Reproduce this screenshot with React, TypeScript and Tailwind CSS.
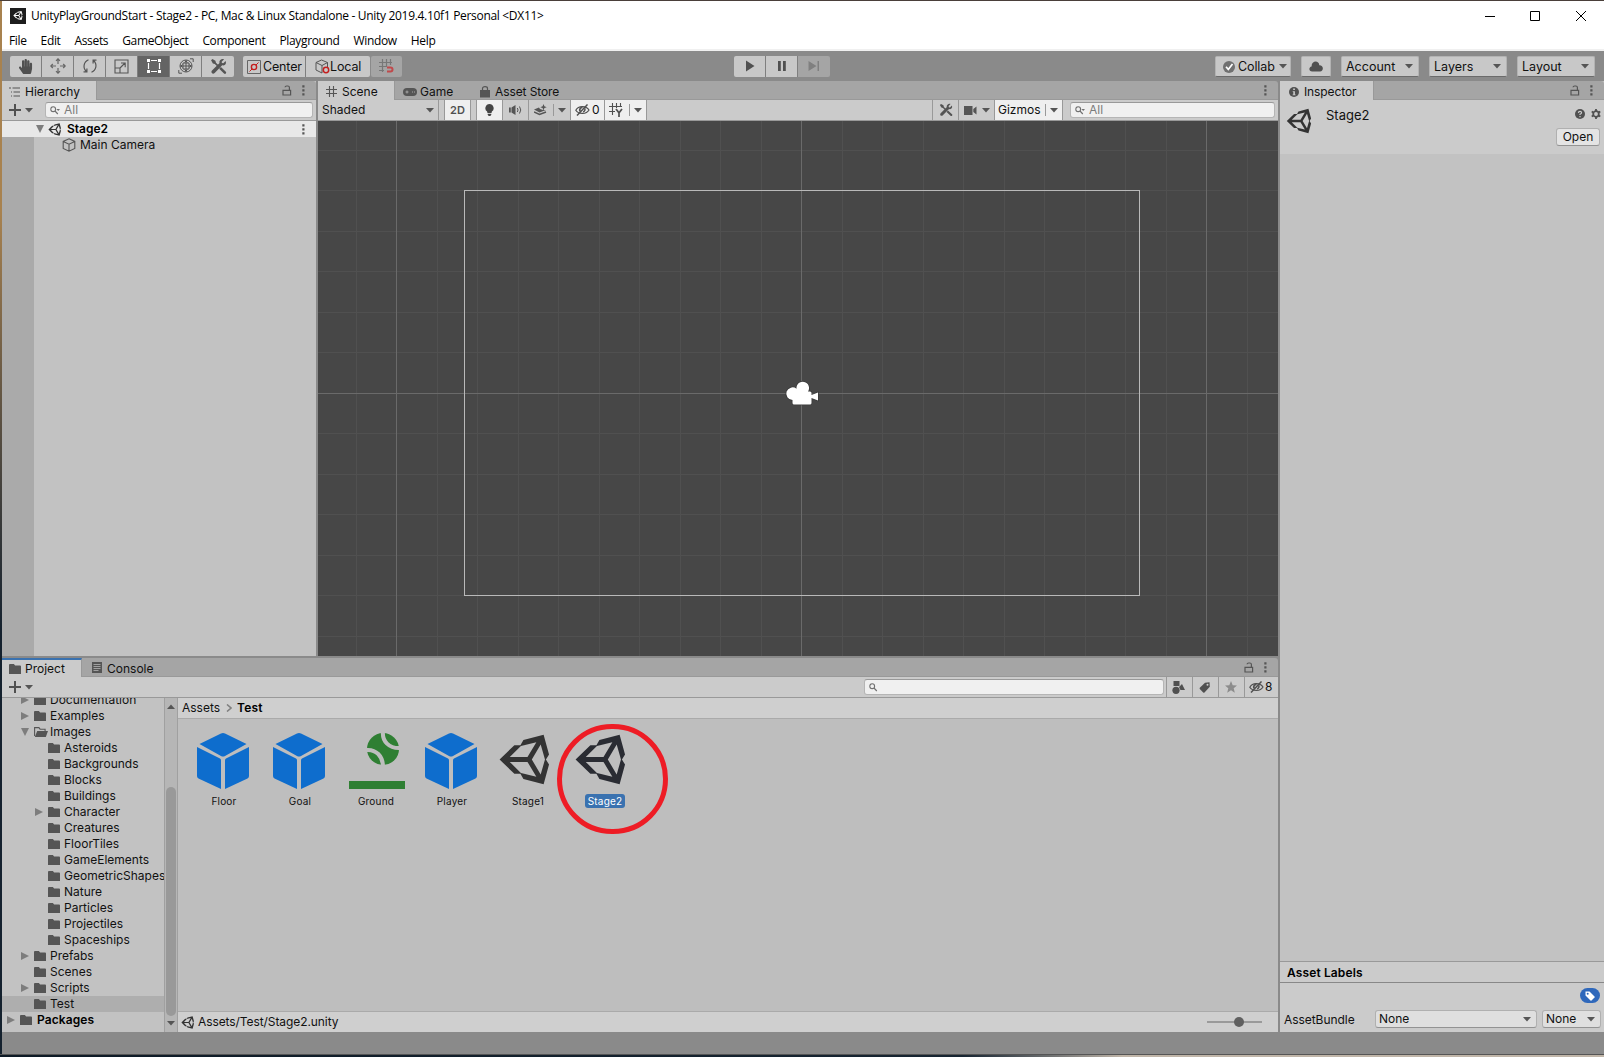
import React from "react";
import { FaHandPaper, FaUnity } from "react-icons/fa";

interface TreeItem {
  name: string;
  depth: number;
  arrow?: "right" | "down";
  selected?: boolean;
}

interface AssetItem {
  name: string;
  kind: "prefab" | "ground" | "scene";
  selected?: boolean;
}

const tree: TreeItem[] = [
  { name: "Documentation", depth: 1, arrow: "right" },
  { name: "Examples", depth: 1, arrow: "right" },
  { name: "Images", depth: 1, arrow: "down" },
  { name: "Asteroids", depth: 2 },
  { name: "Backgrounds", depth: 2 },
  { name: "Blocks", depth: 2 },
  { name: "Buildings", depth: 2 },
  { name: "Character", depth: 2, arrow: "right" },
  { name: "Creatures", depth: 2 },
  { name: "FloorTiles", depth: 2 },
  { name: "GameElements", depth: 2 },
  { name: "GeometricShapes", depth: 2 },
  { name: "Nature", depth: 2 },
  { name: "Particles", depth: 2 },
  { name: "Projectiles", depth: 2 },
  { name: "Spaceships", depth: 2 },
  { name: "Prefabs", depth: 1, arrow: "right" },
  { name: "Scenes", depth: 1 },
  { name: "Scripts", depth: 1, arrow: "right" },
  { name: "Test", depth: 1, selected: true },
  { name: "Packages", depth: 0, arrow: "right" },
];

const assets: AssetItem[] = [
  { name: "Floor", kind: "prefab" },
  { name: "Goal", kind: "prefab" },
  { name: "Ground", kind: "ground" },
  { name: "Player", kind: "prefab" },
  { name: "Stage1", kind: "scene" },
  { name: "Stage2", kind: "scene", selected: true },
];

const menus = ["File", "Edit", "Assets", "GameObject", "Component", "Playground", "Window", "Help"];

const indent: Record<number, string> = {
  0: "pl-[4px]",
  1: "pl-[18px]",
  2: "pl-[32px]",
};

/* ---------- Icons ---------- */

const Caret = ({ className = "" }: { className?: string }) => (
  <svg viewBox="0 0 8 5" className={`w-2 h-[5px] shrink-0 fill-[#555] ${className}`}>
    <path d="M0 0h8L4 4.6z" />
  </svg>
);

const Plus = () => (
  <svg viewBox="0 0 12 12" className="w-3 h-3 stroke-[#505050]" strokeWidth="2">
    <path d="M6 0v12M0 6h12" />
  </svg>
);

const Lock = () => (
  <svg viewBox="0 0 10 11" className="w-[10px] h-[11px] fill-none stroke-[#555]" strokeWidth="1.2">
    <path d="M1 5.4h7.6v4.6H1zM7.4 5.2V2.6C7.4 1.5 6.8 1 5.8 1H4.6c-1 0-1.5.4-1.6 1.3" />
  </svg>
);

const Dots = () => (
  <svg viewBox="0 0 3 11" className="w-[3px] h-[11px] fill-[#555]">
    <path d="M.3.3h2.2v2.2H.3zM.3 4.3h2.2v2.2H.3zM.3 8.3h2.2v2.2H.3z" />
  </svg>
);

const FolderIcon = () => (
  <svg viewBox="0 0 12 10" className="w-3 h-[10px] shrink-0 fill-[#555]">
    <path d="M0 .9Q0 0 .9 0h4l1.2 1.5h5Q12 1.5 12 2.4V10H0z" />
  </svg>
);

const FolderOpenIcon = () => (
  <svg viewBox="0 0 14 10" className="w-[14px] h-[10px] shrink-0">
    <path d="M.6 9V.6h4.3l1.2 1.6h5v2" className="fill-none stroke-[#555]" strokeWidth="1.1" />
    <path d="M3.2 4H14l-2.2 6H.8z" className="fill-[#555]" />
  </svg>
);

const Foldout = ({ dir }: { dir: "right" | "down" }) => (
  <svg viewBox="0 0 8 8" className="w-2 h-2 fill-[#7d7d7d]">
    {dir === "right" ? <path d="M0 0l8 4-8 4z" /> : <path d="M0 0h8L4 8z" />}
  </svg>
);

const SearchIcon = ({ caret }: { caret?: boolean }) => (
  <svg viewBox="0 0 10 9" className="w-[10px] h-[9px] shrink-0 fill-none stroke-[#707070]" strokeWidth="1.1">
    <circle cx="3.2" cy="3.2" r="2.4" />
    <path d="M5 5l2.8 3" />
    {caret && <path d="M6.4 3h3.6L8.2 5z" className="fill-[#707070] stroke-none" />}
  </svg>
);

const GridIcon = () => (
  <svg viewBox="0 0 11 11" className="w-[11px] h-[11px] stroke-[#555] fill-none" strokeWidth="1.1">
    <path d="M3.5 0v11M7.5 0v11M0 3.5h11M0 7.5h11" />
  </svg>
);

const CubeOutline = () => (
  <svg viewBox="0 0 14 14" className="w-[14px] h-[14px] shrink-0 fill-none stroke-[#555]" strokeWidth="1.1">
    <path d="M7 .8l5.8 2.6v7L7 13.2 1.2 10.4v-7zM1.2 3.4L7 6.200l5.800-2.800M7 6.200v7" />
  </svg>
);

const EyeOff = () => (
  <svg viewBox="0 0 15 12" className="w-[15px] h-3 shrink-0 fill-none stroke-[#505050]" strokeWidth="1.2">
    <path d="M.8 6.2C3.5 1.5 11 1.5 14 6 11.500 10.500 3.500 10.500.8 6.200z" />
    <path d="M7.5 3.4a2.600 2.600 0 0 0-2.400 3.900" strokeWidth="1.8" />
    <path d="M12.5.5L2 11.5" strokeWidth="1.5" />
    <path d="M9.8 4.3c.5 1.700-.2 3.100-1.600 3.700" strokeWidth="1.4" />
  </svg>
);

// Crossed wrench and screwdriver
const ToolsIcon = ({ className = "" }: { className?: string }) => (
  <svg viewBox="0 0 16 16" className={className}>
    <path
      d="M13.200 1.200l-2.200 2.300.2 1.300 1.300.2 2.200-2.200c.6 1.500.3 2.700-.5 3.500-.8.700-1.800.9-2.700.6L4.400 14.100c-.8.800-2 .8-2.600.1-.6-.6-.6-1.700.1-2.400L9 4.700c-.4-1-.1-2 .7-2.800.9-.8 2.200-1.200 3.500-.7z"
      className="fill-[#555]"
    />
    <path d="M1 2.200L2.300 1l2.800 1.700.5 1.800L8 6.900 6.900 8 4.500 5.600l-1.800-.5zM8.600 10.200l1.700-1.700 4.600 4.400c.5.500.4 1.200 0 1.700-.5.500-1.200.5-1.700 0z" className="fill-[#555]" />
  </svg>
);

const PrefabCube = () => (
  <svg viewBox="0 0 52 56" className="w-[52px] h-14 fill-[#0e6dcd]">
    <path d="M26 0q1 0 2 .5L49.5 11 28 23q-2 1-4 0L2.5 11 24 .5Q25 0 26 0z" />
    <path d="M0 14l23 11.500q1 .6 1 1.800V56L1.500 45.500Q0 44.700 0 43z" />
    <path d="M52 14L29 25.500q-1 .6-1 1.800V56l22.500-10.500q1.500-.8 1.500-2.500z" />
  </svg>
);

const GroundIcon = () => (
  <svg viewBox="0 0 56 56" className="w-14 h-14 ml-[4px]">
    <circle cx="34" cy="16" r="16" className="fill-[#2f7f33]" />
    <path d="M34-1C33 8 40 15.5 51 15M17 17c10-1 17 6 17 17" className="fill-none stroke-[#bebebe]" strokeWidth="4" />
    <path d="M0 48h56v8H0z" className="fill-[#2f7f33]" />
  </svg>
);

/* ---------- Small building blocks ---------- */

const Search = ({ text, caret, className }: { text?: string; caret?: boolean; className: string }) => (
  <div
    className={`flex items-center h-4 rounded-[3px] border border-[#b5b5b5] border-t-[#999] bg-[#f0f0f0] pl-1 gap-[4px] text-[#7b7b7b] ${className}`}
  >
    <SearchIcon caret={caret} />
    {text}
  </div>
);

const ToolButton = ({ children, active }: { children: React.ReactNode; active?: boolean }) => (
  <button
    className={`flex items-center justify-center w-8 h-full border-r border-[#7f7f7f] last:border-r-0 ${
      active ? "bg-[#646464]" : "bg-[#c8c8c8]"
    }`}
  >
    {children}
  </button>
);

const ToolbarDropdown = ({ label }: { label: string }) => (
  <button className="flex items-center justify-between w-[78px] h-[21px] pt-px pl-[4px] pr-[5px] rounded-[2px] bg-[#c8c8c8] border border-[#b3b3b3] border-b-[#6b6b6b]">
    {label}
    <Caret />
  </button>
);

const TabBar = ({ children }: { children: React.ReactNode }) => (
  <div className="flex h-[19px] shrink-0 bg-[#a5a5a5] pr-[11px] rounded-t-[3px] border-b border-[#999]">{children}</div>
);

const TabActions = () => (
  <div className="flex items-center gap-[10px] ml-auto">
    <Lock />
    <Dots />
  </div>
);

/* ---------- Top of the window ---------- */

const TitleBar = () => (
  <header className="h-[50px] bg-white border-b-2 border-[#f0f0f0] font-['Open_Sans','Noto_Sans',sans-serif] text-black">
    <div className="flex items-center h-[29px] pl-2">
      <div className="flex items-center justify-center w-4 h-4 bg-[#1d1d1d]">
        <FaUnity className="w-[11px] h-[11px] text-white" />
      </div>
      <span className="ml-[5px] text-[12px] tracking-[-0.31px] whitespace-nowrap">
        UnityPlayGroundStart - Stage2 - PC, Mac &amp; Linux Standalone - Unity 2019.4.10f1 Personal &lt;DX11&gt;
      </span>
      <svg viewBox="0 0 102 12" className="w-[102px] h-3 ml-auto mr-[17px] fill-none stroke-black" strokeWidth="1">
        <path d="M0 6.5h10M45.5 1.5h9v9h-9zM91 1l10 10M101 1L91 11" />
      </svg>
    </div>
    <nav className="flex items-center h-[21px] pl-[7px] gap-[14px] text-[12px] tracking-[-0.35px]">
      {menus.map((menu) => (
        <span key={menu}>{menu}</span>
      ))}
    </nav>
  </header>
);

const Toolbar = () => (
  <div className="flex items-center h-[30px] bg-[#8a8a8a] pl-2 pr-[9px] text-[12.5px]">
    <div className="flex h-[21px] rounded-[2px] overflow-hidden">
      <ToolButton>
        <FaHandPaper className="w-[15px] h-[15px] text-[#505050]" />
      </ToolButton>
      <ToolButton>
        <svg viewBox="0 0 16 16" className="w-4 h-4 fill-none stroke-[#666]" strokeWidth="1.2">
          <path d="M8 1v5M8 10v5M1 8h5M10 8h5M6 2.800L8 .8l2 2M6 13.200l2 2 2-2M2.800 6L.8 8l2 2M13.200 6l2 2-2 2" />
        </svg>
      </ToolButton>
      <ToolButton>
        <svg viewBox="0 0 16 16" className="w-4 h-4 fill-none stroke-[#555]" strokeWidth="1.2">
          <path d="M6.500 1.800C1.500 4 .5 10 4.500 13.500M1.500 13.800h3.400v-3.200M9.500 14.200C14.500 12 15.500 6 11.500 2.500M14.500 2.200h-3.400v3.200" />
        </svg>
      </ToolButton>
      <ToolButton>
        <svg viewBox="0 0 15 15" className="w-[15px] h-[15px] fill-none stroke-[#555]" strokeWidth="1.1">
          <path d="M1 1h13v13H1zM1 9h5v5M6 9l5-5M7 4h4.200v4.200" />
        </svg>
      </ToolButton>
      <ToolButton active>
        <svg viewBox="0 0 16 16" className="w-4 h-4 fill-none stroke-white" strokeWidth="1.2">
          <path d="M5 2.500h6M5 13.500h6M2.500 5v6M13.500 5v6" />
          <path d="M1 1h3v3H1zM12 1h3v3h-3zM1 12h3v3H1zM12 12h3v3h-3z" className="fill-white stroke-none" />
        </svg>
      </ToolButton>
      <ToolButton>
        <svg viewBox="0 0 16 16" className="w-4 h-4 fill-none stroke-[#555]" strokeWidth="1">
          <circle cx="8" cy="8" r="6" />
          <path d="M8 2v12M2 8h12M6.500 4.500L8 3l1.500 1.500M6.500 11.500L8 13l1.500-1.500M4.500 6.500L3 8l1.500 1.500M11.500 6.500L13 8l-1.500 1.500M5 5h6v6H5zM12 .8h3.200V4M.8 12v3.200H4" />
        </svg>
      </ToolButton>
      <ToolButton>
        <ToolsIcon className="w-[17px] h-[17px]" />
      </ToolButton>
    </div>

    <div className="flex h-[21px] ml-[9px] rounded-[2px] overflow-hidden">
      <button className="flex items-center w-[63px] pt-px pl-[4px] gap-[2px] bg-[#c8c8c8] border-r border-[#7f7f7f]">
        <svg viewBox="0 0 14 14" className="w-[14px] h-[14px] shrink-0 fill-none stroke-[#666]" strokeWidth="1">
          <path d="M.5.5h13v13H.5z" />
          <circle cx="7" cy="7" r="2.6" className="stroke-[#c41f1f]" strokeWidth="1.4" />
          <path d="M9 5l2.500-2.500M5 9l-2.500 2.500" className="stroke-[#c41f1f]" />
        </svg>
        <span className="tracking-[-0.15px]">Center</span>
      </button>
      <button className="flex items-center w-[64px] pt-px pl-[9px] bg-[#c8c8c8]">
        <svg viewBox="0 0 15 15" className="w-[15px] h-[15px] shrink-0 fill-none stroke-[#555]" strokeWidth="1">
          <path d="M7 14L1 11V3.500L6.500 1 12.500 3.500V8M1 3.500l6 3 5.500-3M7 6.500V14" />
          <circle cx="11" cy="11" r="2.7" className="fill-[#c8c8c8] stroke-[#c41f1f]" strokeWidth="1.5" />
        </svg>
        <span className="tracking-[-0.15px]">Local</span>
      </button>
    </div>
    <button className="flex items-center justify-center w-[31px] h-[21px] ml-[1px] rounded-[2px] bg-[#a5a5a5]">
      <svg viewBox="0 0 15 15" className="w-[15px] h-[15px] fill-none stroke-[#777]" strokeWidth="1.2">
        <path d="M3.500 0v13M7.500 0v7M11.500 0v6M0 3.500h13M0 7.500h8M0 11.500h5" />
        <path d="M8 8.500h3.500a2 2 0 0 1 0 4H8" className="stroke-[#c0494b]" strokeWidth="2" />
      </svg>
    </button>

    <div className="flex h-[21px] ml-[332px] rounded-[2px] overflow-hidden">
      <ToolButton>
        <svg viewBox="0 0 10 12" className="w-[10px] h-3 fill-[#505050]">
          <path d="M1 .5l8.500 5.500L1 11.500z" />
        </svg>
      </ToolButton>
      <ToolButton>
        <svg viewBox="0 0 10 12" className="w-[10px] h-3 fill-[#505050]">
          <path d="M1 1h2.800v10H1zM6 1h2.800v10H6z" />
        </svg>
      </ToolButton>
      <button className="flex items-center justify-center w-8 bg-[#a5a5a5]">
        <svg viewBox="0 0 12 12" className="w-3 h-3 fill-[#808080]">
          <path d="M.5 1l8 5-8 5zM9.500 1H11v10H9.500z" />
        </svg>
      </button>
    </div>

    <div className="flex items-center gap-[10px] ml-auto">
      <button className="flex items-center w-[76px] h-[21px] pt-px pl-[7px] gap-[3px] rounded-[2px] bg-[#c8c8c8] border border-[#b3b3b3] border-b-[#6b6b6b]">
        <svg viewBox="0 0 12 12" className="w-3 h-3 shrink-0">
          <circle cx="6" cy="6" r="6" className="fill-[#707070]" />
          <path d="M3 5.800l2.300 2.600L9.500 3" className="fill-none stroke-white" strokeWidth="1.7" />
        </svg>
        <span className="tracking-[-0.1px]">Collab</span>
        <Caret className="ml-[1px]" />
      </button>
      <button className="flex items-center justify-center w-[30px] h-[21px] rounded-[2px] bg-[#c8c8c8] border border-[#b3b3b3] border-b-[#6b6b6b]">
        <svg viewBox="0 0 14 11" className="w-[14px] h-[11px] fill-[#505050]">
          <path d="M3.200 10.500C-.3 10.500-.6 6 2.600 5.500 2.300-.5 10-1 10.300 4.200c4.500-.2 4.700 6.300.7 6.300z" />
        </svg>
      </button>
      <ToolbarDropdown label="Account" />
      <ToolbarDropdown label="Layers" />
      <ToolbarDropdown label="Layout" />
    </div>
  </div>
);

/* ---------- Hierarchy ---------- */

const Hierarchy = () => (
  <section className="flex flex-col w-[314px] bg-[#c2c2c2]">
    <TabBar>
      <div className="flex items-center w-[95px] h-[19px] pt-[2px] pl-[7px] gap-[5px] bg-[#cbcbcb] border-r border-[#999]">
        <svg viewBox="0 0 11 10" className="w-[11px] h-[10px] fill-none stroke-[#555]" strokeWidth="1.1">
          <path d="M0 1h2M3.500 1H11M2 5h1M4.500 5H11M2 9h1M4.500 9H11" />
        </svg>
        Hierarchy
      </div>
      <TabActions />
    </TabBar>
    <div className="flex items-center h-[21px] bg-[#cbcbcb] border-b border-[#999] pl-[7px] pr-[3px]">
      <Plus />
      <Caret className="ml-[4px]" />
      <Search text="All" caret className="ml-3 flex-1" />
    </div>
    <div className="flex items-center h-4 bg-[#e8e8e8] pl-[34px] pr-[11px] font-semibold text-black">
      <Foldout dir="down" />
      <FaUnity className="w-[15px] h-[15px] ml-[4px] mr-[4px] text-[#333]" />
      Stage2
      <span className="ml-auto">
        <Dots />
      </span>
    </div>
    <div className="flex flex-1">
      <div className="w-8 bg-[#aaaaaa]" />
      <div className="flex items-center h-4 pl-[28px] gap-[4px]">
        <CubeOutline />
        Main Camera
      </div>
    </div>
  </section>
);

/* ---------- Scene view ---------- */

const minorX = Array.from({ length: 24 }, (_, i) => Math.floor(38.2 + i * 40.5)).filter((x) => x < 960);
const minorY = Array.from({ length: 13 }, (_, i) => Math.floor(29.3 + i * 40.5));

const SceneView = () => (
  <div className="flex-1 bg-[#474747]">
    <svg viewBox="0 0 960 535" className="w-[960px] h-[535px]" shapeRendering="crispEdges">
      <g className="fill-[#505050]">
        {minorX.map((x) => (
          <rect key={x} x={x} y="0" width="1" height="535" />
        ))}
        {minorY.map((y) => (
          <rect key={y} x="0" y={y} width="960" height="1" />
        ))}
      </g>
      <g className="fill-[#6a6a6a]">
        <rect x="78" y="0" width="1" height="535" />
        <rect x="483" y="0" width="1" height="535" />
        <rect x="888" y="0" width="1" height="535" />
        <rect x="0" y="272" width="960" height="1" />
      </g>
      <rect x="146.5" y="69.5" width="675" height="405" className="fill-none stroke-[#b9b9b9]" />
      <g className="fill-white stroke-[#3a3a3a]" strokeWidth="1.5" paintOrder="stroke" shapeRendering="geometricPrecision">
        <path d="M474.500 279a6.300 6.300 0 1 1 4-11.200 6.300 6.300 0 1 1 11.500 2.700h2q1.500 0 1.500 1.500v2l6.500-2.500v8L493.500 277v5q0 1.500-1.500 1.500h-16q-1.500 0-1.500-1.500z" />
      </g>
    </svg>
  </div>
);

const Scene = () => (
  <section className="flex flex-col w-[960px]">
    <TabBar>
      <div className="flex items-center w-[77px] h-[19px] pt-[2px] pl-2 gap-[5px] bg-[#cbcbcb] border-r border-[#999]">
        <GridIcon />
        Scene
      </div>
      <div className="flex items-center w-[77px] pt-[3px] pl-2 gap-[3px]">
        <svg viewBox="0 0 14 8" className="w-[14px] h-2">
          <rect width="14" height="8" rx="4" className="fill-[#555]" />
          <path d="M2.500 4h3M4 2.500v3M9 4h1M11 4h1" className="stroke-[#a5a5a5]" strokeWidth="1" />
        </svg>
        Game
      </div>
      <div className="flex items-center pt-[3px] pl-2 gap-[5px]">
        <svg viewBox="0 0 10 12" className="w-[10px] h-3">
          <path d="M0 4h10v7.500H0z" className="fill-[#555]" />
          <path d="M2.500 5V2.500Q2.500.7 5 .7t2.500 1.800V5" className="fill-none stroke-[#555]" strokeWidth="1.2" />
        </svg>
        <span className="tracking-[-0.1px]">Asset Store</span>
      </div>
      <div className="flex items-center ml-auto">
        <Dots />
      </div>
    </TabBar>
    <div className="flex h-[21px] bg-[#cbcbcb] border-b border-[#999]">
      <div className="flex items-center justify-between w-[121px] pl-1 pr-1 border-r border-[#999]">
        Shaded
        <Caret />
      </div>
      <div className="flex items-center justify-center w-[27px] ml-[5px] border-x border-[#999] bg-[#efefef] text-[11px] font-semibold text-[#505050]">
        2D
      </div>
      <div className="flex items-center justify-center w-[27px] ml-[5px] border-x border-[#999] bg-[#efefef]">
        <svg viewBox="0 0 9 12" className="w-[9px] h-3 fill-[#444]">
          <path d="M4.500 0a4.200 4.200 0 0 1 2.400 7.600L6.500 9h-4l-.4-1.400A4.200 4.200 0 0 1 4.500 0zM2.700 9.800h3.600v1L5.300 12H3.700l-1-1.200z" />
        </svg>
      </div>
      <div className="flex items-center justify-center w-[26px] border-r border-[#999]">
        <svg viewBox="0 0 13 10" className="w-[13px] h-[10px]">
          <path d="M0 2.500h1.800v5H0zM2.500 2.500L6.500 0v10l-4-2.500z" className="fill-[#555]" />
          <path d="M8.300 3q1.500 2 0 4M10.500 1.500q2.500 3.500 0 7" className="fill-none stroke-[#555]" strokeWidth="1" />
        </svg>
      </div>
      <div className="flex items-center w-[42px] pl-[5px] border-r border-[#999]">
        <svg viewBox="0 0 14 12" className="w-[14px] h-3">
          <path d="M0 5.500l5-2 1 1.500 3 1 3 0L5.500 8.500z" className="fill-[#555]" />
          <path d="M0 8L5.500 10.500 12 8" className="fill-none stroke-[#555]" strokeWidth="1.4" />
          <path d="M9.500 0l.9 2.300 2.300.9-2.300.9-.9 2.300-.9-2.300L6.300 3.200l2.300-.9z" className="fill-[#555]" />
        </svg>
        <div className="w-px h-3 ml-[5px] mr-[4px] bg-[#999]" />
        <Caret />
      </div>
      <div className="flex items-center w-[34px] pl-1 gap-[2px] border-r border-[#999] bg-[#efefef]">
        <EyeOff />0
      </div>
      <div className="flex items-center w-[42px] pl-1 border-r border-[#999] bg-[#efefef]">
        <svg viewBox="0 0 15 14" className="w-[15px] h-[14px] fill-none stroke-[#505050]" strokeWidth="1.1">
          <path d="M3.500 0v12M7.500 0v5M11.500 0v4M0 3.500h13M0 8.500h6" />
          <path d="M7 6l3 3.800L13 6M10 9.500V14" strokeWidth="1.7" />
        </svg>
        <div className="w-px h-3 ml-[5px] mr-[4px] bg-[#999]" />
        <Caret />
      </div>

      <div className="flex items-center justify-center w-[27px] ml-auto border-x border-[#999]">
        <ToolsIcon className="w-[14px] h-[14px]" />
      </div>
      <div className="flex items-center w-9 pl-[5px] gap-[5px] border-r border-[#999]">
        <svg viewBox="0 0 13 9" className="w-[13px] h-[9px] fill-[#555]">
          <path d="M0 0h8.500v9H0zM9.300 3L12.500.5v8L9.300 6z" />
        </svg>
        <Caret />
      </div>
      <div className="flex items-center w-[68px] pl-[3px] border-r border-[#999] bg-[#efefef]">
        Gizmos
        <div className="w-px h-3 ml-auto mr-1 bg-[#999]" />
        <Caret className="mr-[4px]" />
      </div>
      <div className="flex items-center pl-[7px] pr-[3px]">
        <Search text="All" caret className="w-[205px]" />
      </div>
    </div>
    <SceneView />
  </section>
);

/* ---------- Project ---------- */

const TreeRow = ({ item }: { item: TreeItem }) => (
  <div className={`flex items-center h-4 shrink-0 whitespace-nowrap ${indent[item.depth]} ${item.selected ? "bg-[#aeaeae]" : ""}`}>
    <div className="w-[14px] shrink-0 pl-[1px]">{item.arrow && <Foldout dir={item.arrow} />}</div>
    {item.arrow === "down" ? <FolderOpenIcon /> : <FolderIcon />}
    <span
      className={
        item.depth === 0 ? "ml-[5px] font-semibold tracking-[0.1px] text-black" : item.arrow === "down" ? "ml-[2px]" : "ml-1"
      }
    >
      {item.name}
    </span>
  </div>
);

const AssetTile = ({ item }: { item: AssetItem }) => (
  <div className="flex flex-col items-center w-[76px]">
    <div className="flex items-center justify-center h-14">
      {item.kind === "prefab" && <PrefabCube />}
      {item.kind === "ground" && <GroundIcon />}
      {item.kind === "scene" && (
        <FaUnity className={`w-[59px] h-[61px] shrink-0 mb-1 ${item.selected ? "text-[#2a2c33]" : "text-[#333]"}`} />
      )}
    </div>
    <span
      className={`mt-[5px] h-[14px] leading-[14px] rounded-[3px] text-[10px] tracking-[0.2px] ${
        item.selected ? "ml-[4px] px-[3px] bg-[#3a72b0] text-white" : "ml-[2px]"
      }`}
    >
      {item.name}
    </span>
  </div>
);

const FilterButton = ({ children }: { children: React.ReactNode }) => (
  <div className="flex items-center justify-center w-[26px] h-full pr-[2px] border-l border-[#999]">{children}</div>
);

const Project = () => (
  <section className="flex flex-col h-[374px]">
    <TabBar>
      <div className="flex items-center w-20 h-[19px] pl-[7px] gap-[4px] bg-[#cbcbcb] border-t-2 border-t-[#3a72b0] border-r border-r-[#999]">
        <FolderIcon />
        Project
      </div>
      <div className="flex items-center pt-[3px] pl-[10px] gap-[5px]">
        <svg viewBox="0 0 10 11" className="w-[10px] h-[11px] mb-[2px]">
          <path d="M0 0h10v11H0z" className="fill-[#555]" />
          <path d="M1.500 2.500h7M1.500 4.500h7M1.500 6.500h7M1.500 8.500h5" className="stroke-[#b5b5b5]" strokeWidth=".8" />
        </svg>
        Console
      </div>
      <TabActions />
    </TabBar>
    <div className="flex items-center h-[21px] bg-[#cbcbcb] border-b border-[#999] pl-[7px]">
      <Plus />
      <Caret className="ml-[4px]" />
      <Search className="w-[300px] ml-auto mr-[2px]" />
      <FilterButton>
        <svg viewBox="0 0 13 13" className="w-[13px] h-[13px] fill-[#505050]">
          <path d="M1.500 0h6v5h-6zM10 3l3 6H8.500L7 6z" />
          <circle cx="4" cy="9.3" r="3.6" />
        </svg>
      </FilterButton>
      <FilterButton>
        <svg viewBox="0 0 11 11" className="w-[11px] h-[11px]">
          <path d="M6 .8L10.500.3 10.800 4.800 5.500 10.500Q4.800 11 4.200 10.500L.8 7Q.3 6.300.8 5.700z" className="fill-[#505050]" />
          <circle cx="8.5" cy="2.7" r="1" className="fill-[#cbcbcb]" />
        </svg>
      </FilterButton>
      <FilterButton>
        <svg viewBox="0 0 12 12" className="w-3 h-3 fill-[#8c8c8c]">
          <path d="M6 0l1.700 4.200 4.300.3-3.300 2.800 1.100 4.400L6 9.300l-3.800 2.400 1.100-4.400L0 4.500l4.300-.3z" />
        </svg>
      </FilterButton>
      <div className="flex items-center w-[34px] h-full pl-[4px] gap-[1px] border-l border-[#999]">
        <EyeOff />8
      </div>
    </div>
    <div className="flex h-[334px]">
      <div className="flex flex-col justify-end w-[162px] pb-1 overflow-hidden bg-[#c2c2c2]">
        {tree.map((item) => (
          <TreeRow key={item.name} item={item} />
        ))}
      </div>
      <div className="flex flex-col items-center w-[14px] py-[6px] bg-[#b6b6b6] border-x border-[#a0a0a0]">
        <Caret className="rotate-180" />
        <div className="w-[10px] h-[229px] mt-auto rounded-full bg-[#999]" />
        <Caret className="mt-[5px]" />
      </div>
      <div className="flex flex-col flex-1 bg-[#bebebe]">
        <div className="flex items-center h-[21px] pl-1 bg-[#cfcfcf] border-b border-[#aaa]">
          Assets
          <svg viewBox="0 0 6 8" className="w-[6px] h-2 ml-[6px] mr-[5px] fill-none stroke-[#808080]" strokeWidth="1.6">
            <path d="M1 .5L5 4 1 7.500" />
          </svg>
          <span className="font-semibold tracking-[0.2px] text-black">Test</span>
        </div>
        <div className="relative flex flex-1 pl-[7px] pt-[14px]">
          {assets.map((item) => (
            <AssetTile key={item.name} item={item} />
          ))}
          {/* Highlight ring around the new scene */}
          <div className="absolute left-[379px] top-[5px] w-[111px] h-[110px] rounded-full border-[5px] border-[#ee1c25]" />
        </div>
        <div className="flex items-center h-[21px] pl-[3px] pr-4 bg-[#cfcfcf] border-t border-[#aaa]">
          <FaUnity className="w-[15px] h-[15px] mr-[2px] text-[#333]" />
          <span className="tracking-[-0.08px]">Assets/Test/Stage2.unity</span>
          <svg viewBox="0 0 55 10" className="w-[55px] h-[10px] ml-auto">
            <path d="M0 5h55" className="stroke-[#888]" strokeWidth="1.5" />
            <circle cx="32" cy="5" r="5" className="fill-[#606060]" />
          </svg>
        </div>
      </div>
    </div>
  </section>
);

/* ---------- Inspector ---------- */

const Inspector = () => (
  <section className="flex flex-col flex-1 bg-[#c2c2c2]">
    <TabBar>
      <div className="flex items-center w-[94px] h-[19px] pt-[2px] pl-[9px] gap-[5px] bg-[#cbcbcb] border-r border-[#999]">
        <svg viewBox="0 0 10 10" className="w-[10px] h-[10px]">
          <circle cx="5" cy="5" r="5" className="fill-[#505050]" />
          <path d="M4.200 1.600h1.700v1.500H4.200zM3.700 4.200h2.200v3.200h.7v.9H3.600v-.9h.7V5h-.6z" className="fill-[#cbcbcb]" />
        </svg>
        <span className="tracking-[-0.1px]">Inspector</span>
      </div>
      <TabActions />
    </TabBar>
    <div className="flex h-[54px] pt-[8px] pl-[6px] pr-[4px] bg-[#cbcbcb]">
      <FaUnity className="w-[29px] h-[30px] -mt-[2px] text-[#333]" />
      <div className="flex flex-col flex-1 pl-[11px]">
        <div className="flex items-center justify-between h-[13px] -mr-[1px]">
          <span className="text-[13px]">Stage2</span>
          <div className="flex items-center gap-[6px] -mt-[2px]">
            <svg viewBox="0 0 10 10" className="w-[10px] h-[10px]">
              <circle cx="5" cy="5" r="5" className="fill-[#505050]" />
              <path d="M3.400 3.900Q3.500 2.400 5 2.400T6.600 3.700Q6.600 4.400 5 5.200V6M5 7v1.200" className="fill-none stroke-[#cbcbcb]" strokeWidth="1.2" />
            </svg>
            <svg viewBox="0 0 10 10" className="w-[10px] h-[10px] fill-none stroke-[#505050]">
              <circle cx="5" cy="5" r="2.8" strokeWidth="1.8" />
              <path d="M5 0v2M5 8v2M.7 2.500l1.700 1M7.600 6.500l1.700 1M.7 7.500l1.700-1M7.600 3.500l1.700-1" strokeWidth="1.8" />
            </svg>
          </div>
        </div>
        <button className="self-end w-[44px] h-[18px] mt-[7px] rounded-[3px] bg-[#e4e4e4] border border-[#b0b0b0] border-b-[#939393] leading-[16px]">
          Open
        </button>
      </div>
    </div>
    <div className="mt-auto bg-[#cbcbcb] border-t border-[#999]">
      <div className="flex items-center h-[21px] pt-[2px] pl-[7px] border-b border-[#888] font-semibold tracking-[0.12px] text-black">
        Asset Labels
      </div>
      <div className="flex justify-end pt-[5px] pr-1">
        <div className="flex items-center justify-center w-5 h-[15px] rounded-full bg-[#2f68bb]">
          <svg viewBox="0 0 10 10" className="w-[10px] h-[10px]">
            <path d="M.5.5h4l5 5q.5.500 0 1L6.500 9.500q-.5.500-1 0l-5-5z" className="fill-white" />
            <circle cx="2.7" cy="2.7" r="1" className="fill-[#2f68bb]" />
          </svg>
        </div>
      </div>
      <div className="flex items-center h-[29px] pl-1 pt-[3px] pr-[3px]">
        <span className="w-[91px] pt-[2px] tracking-[-0.05px]">AssetBundle</span>
        <div className="flex items-center justify-between w-[162px] h-[18px] pl-[3px] pr-[5px] rounded-[3px] bg-[#dfdfdf] border border-[#b0b0b0] border-b-[#939393]">
          None
          <Caret />
        </div>
        <div className="flex items-center justify-between w-[59px] h-[18px] ml-auto pl-[3px] pr-[5px] rounded-[3px] bg-[#dfdfdf] border border-[#b0b0b0] border-b-[#939393]">
          None
          <Caret />
        </div>
      </div>
    </div>
  </section>
);

const App: React.FC = () => {
  return (
    <div className="flex flex-col w-[1604px] h-[1057px] overflow-hidden bg-[#101c28] font-['Inter',sans-serif] text-[12px] leading-4 text-[#111]">
      <div className="h-px shrink-0 bg-[#4a3f3a]" />
      <div className="flex shrink-0 h-[1053px]">
        <div className="w-[2px] bg-linear-to-b from-[#a8824f] from-20% to-[#14212e] to-60%" />
        <div className="flex flex-col flex-1 bg-[#8a8a8a]">
          <TitleBar />
          <Toolbar />
          <div className="flex h-[951px] gap-[2px]">
            <div className="flex flex-col w-[1276px] gap-[2px]">
              <div className="flex h-[575px] gap-[2px]">
                <Hierarchy />
                <Scene />
              </div>
              <Project />
            </div>
            <Inspector />
          </div>
        </div>
      </div>
      <div className="h-px shrink-0 bg-[#555]" />
      <div className="flex-1 bg-linear-to-r from-[#0d1a26] via-[#172532] via-60% to-[#c0b5a8] to-70%" />
    </div>
  );
};

export default App;
